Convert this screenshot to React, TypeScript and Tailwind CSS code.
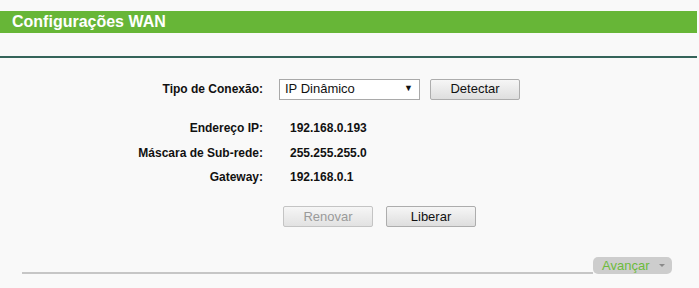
export default function App() {
  return (
    <div className="w-[699px] h-[288px] bg-[#f9f9f9] overflow-hidden font-['Liberation_Sans',Arial,sans-serif] text-[#111]">
      <div className="pt-[11px]">
        <div className="w-[697px] h-[22px] bg-[#67b637] pl-[12px] flex items-center text-white font-bold text-[16px] leading-none">
          Configurações WAN
        </div>
      </div>
      <div className="mt-[23px] w-[697px] h-[2px] bg-[#35645a]" />
      <div className="pt-[20px]">
        <div className="flex items-center h-[22px]">
          <div className="w-[263px] text-right font-bold text-[12px]">Tipo de Conexão:</div>
          <div className="ml-[16px] w-[141px] h-[21px] border border-[#a9a9a9] bg-white flex items-center justify-between pl-[5px] pr-[6px] text-[13px]">
            <span>IP Dinâmico</span>
            <span className="text-[9px]">▼</span>
          </div>
          <div className="ml-[10px] w-[90px] h-[21px] border border-[#adadad] rounded-[2px] bg-gradient-to-b from-[#f6f6f6] to-[#dedede] flex items-center justify-center text-[13px]">
            Detectar
          </div>
        </div>
        <div className="mt-[18px] flex flex-col gap-[5px] text-[12px] font-bold">
          <div className="flex items-center h-[20px]">
            <div className="w-[263px] text-right">Endereço IP:</div>
            <div className="ml-[27px]">192.168.0.193</div>
          </div>
          <div className="flex items-center h-[19px]">
            <div className="w-[263px] text-right">Máscara de Sub-rede:</div>
            <div className="ml-[27px]">255.255.255.0</div>
          </div>
          <div className="flex items-center h-[20px]">
            <div className="w-[263px] text-right">Gateway:</div>
            <div className="ml-[27px]">192.168.0.1</div>
          </div>
        </div>
        <div className="mt-[19px] flex h-[21px] pl-[283px] gap-[13px]">
          <div className="w-[90px] h-[21px] border border-[#c4c4c4] rounded-[2px] bg-gradient-to-b from-[#f6f6f6] to-[#e2e2e2] flex items-center justify-center text-[13px] text-[#9a9a9a]">
            Renovar
          </div>
          <div className="w-[90px] h-[21px] border border-[#adadad] rounded-[2px] bg-gradient-to-b from-[#f6f6f6] to-[#dedede] flex items-center justify-center text-[13px]">
            Liberar
          </div>
        </div>
      </div>
      <div className="mt-[30px] flex items-end pl-[22px]">
        <div className="w-[571px] h-[2px] bg-[#c6c6c6]" />
        <div className="w-[79px] h-[17px] rounded-[5px] bg-[#cdcdcd] flex items-center pl-[9px] pr-[7px] justify-between text-[13px] text-[#6cbb3c]">
          <span>Avançar</span>
          <span className="w-0 h-0 border-l-[3px] border-r-[3px] border-t-[3px] border-l-transparent border-r-transparent border-t-[#8a8a8a]" />
        </div>
      </div>
    </div>
  );
}
